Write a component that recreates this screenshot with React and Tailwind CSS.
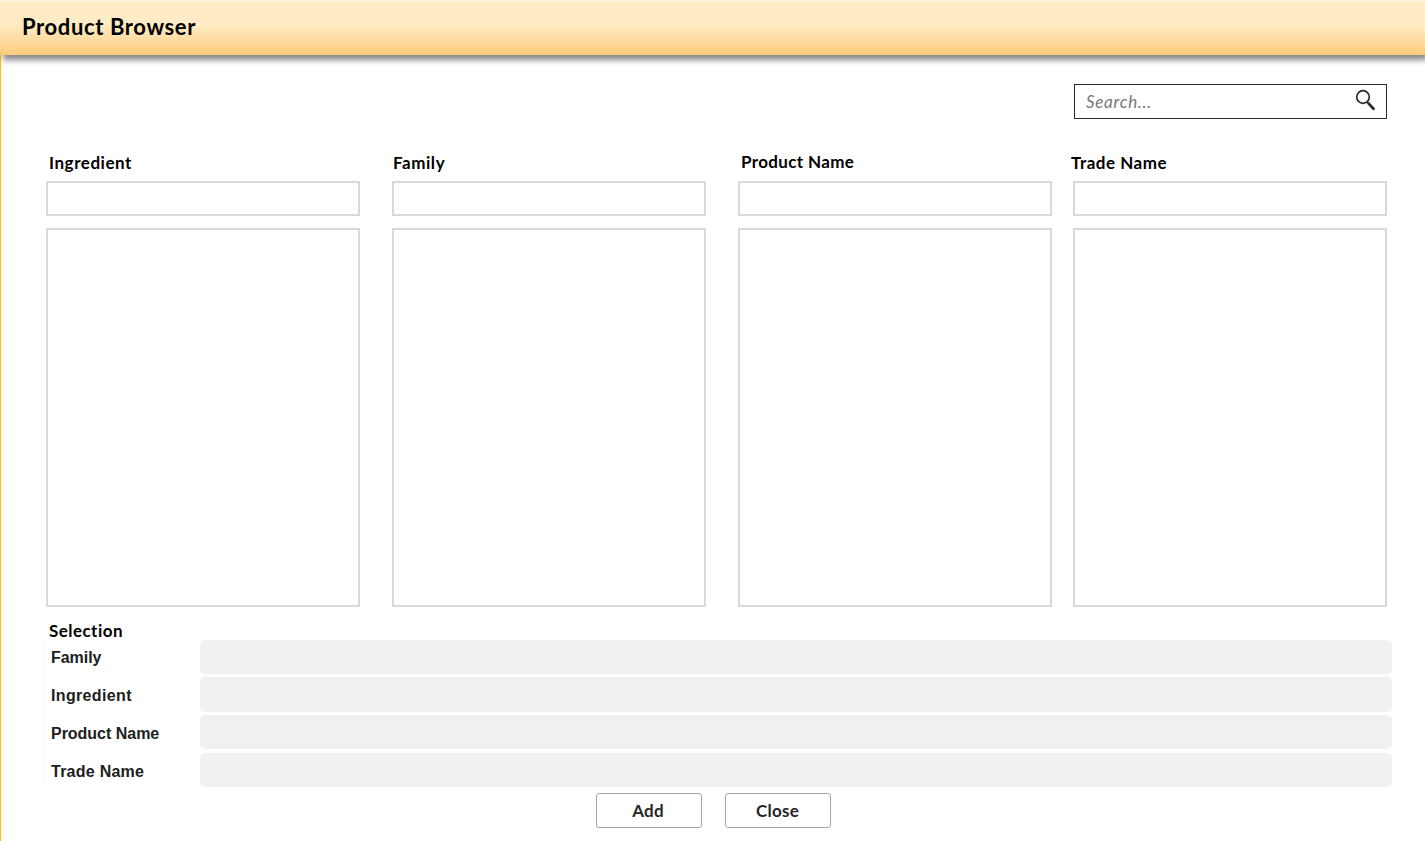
const columns = [
  { name: 'Ingredient', box: 'ml-[45px]', label: 'pl-[3px] pt-[7px] tracking-[0.55px]' },
  { name: 'Family', box: 'ml-8', label: 'pl-[1px] pt-[7px] tracking-[0.55px]' },
  { name: 'Product Name', box: 'ml-8', label: 'pl-[3px] pt-[6px] tracking-[0.35px]' },
  { name: 'Trade Name', box: 'ml-[21px]', label: '-ml-[2px] pt-[7px] tracking-[0.5px]' },
];

const selections = [
  { name: 'Family', row: 'h-[34px]', label: 'pt-[2px] tracking-[-0.05px]' },
  { name: 'Ingredient', row: 'h-[35px] mt-[3px]', label: 'pt-[2px] tracking-[0.35px]' },
  { name: 'Product Name', row: 'h-[34px] mt-[3px]', label: 'pt-1 tracking-[-0.02px]' },
  { name: 'Trade Name', row: 'h-[34px] mt-1', label: 'pt-1 tracking-[0.25px]' },
];

function SearchIcon() {
  return (
    <svg className="mb-[3px] h-[22px] w-[21px] shrink-0" viewBox="0 0 21 22" fill="none" stroke="#2b2b2b">
      <circle cx="8" cy="8" r="6.3" strokeWidth="1.7" />
      <path d="M11.8 12.6 13.4 14.3" strokeWidth="1.6" />
      <path d="M13.5 14.4 18.5 19.8" strokeWidth="2.8" strokeLinecap="round" />
    </svg>
  );
}

export default function App() {
  return (
    <div className="flex h-[841px] w-[1425px] flex-col overflow-hidden bg-white font-['Lato','Liberation_Sans',sans-serif] text-black">
      <header className="relative z-10 flex h-[55px] shrink-0 items-center border-t border-[#fff3da] bg-[linear-gradient(to_bottom,#ffecc6_0%,#ffecc6_42%,#fedda3_70%,#fecb79_100%)] pb-[2px] pl-[22px] shadow-[3px_5px_6px_rgba(0,0,0,0.48)]">
        <h1 className="text-[22px] leading-[26px] font-bold tracking-[0.62px]">Product Browser</h1>
      </header>
      <main className="flex flex-1 flex-col border-l border-[#ffc000]">
        <div className="mt-[29px] mr-[38px] flex h-[35px] w-[313px] shrink-0 items-center self-end border border-[#2b2b2b] pl-[11px] pr-[10px]">
          <input
            type="text"
            aria-label="Search"
            placeholder="Search..."
            className="min-w-0 flex-1 text-[17px] tracking-[0.7px] italic outline-none placeholder:text-[#777]"
          />
          <SearchIcon />
        </div>
        <div className="mt-[27px] flex shrink-0">
          {columns.map((c) => (
            <section key={c.name} className={`flex w-[314px] shrink-0 flex-col ${c.box}`}>
              <h2 className={`h-[35px] text-[17px] leading-5 font-bold ${c.label}`}>{c.name}</h2>
              <input type="text" aria-label={c.name} className="h-[35px] w-full border-2 border-[#d9d9d9] px-2 outline-none" />
              <div className="mt-3 h-[379px] border-2 border-[#d9d9d9]" />
            </section>
          ))}
        </div>
        <h2 className="mt-[14px] h-[19px] shrink-0 pl-12 text-[17px] leading-5 font-bold tracking-[0.45px]">Selection</h2>
        <div className="ml-[43px] flex h-[147px] shrink-0 flex-col border-l border-[#f3f8fc]">
          {selections.map((s) => (
            <div key={s.name} className={`flex items-center ${s.row}`}>
              <span className={`w-[155px] pl-[6px] font-['Liberation_Sans',sans-serif] text-[16px] leading-5 font-bold text-[#202020] ${s.label}`}>{s.name}</span>
              <div className="h-full w-[1192px] rounded-[5px] bg-[#f1f1f1]" />
            </div>
          ))}
        </div>
        <div className="mt-[6px] ml-[595px] flex gap-[23px] text-[17px] font-bold tracking-[0.25px] text-[#262626]">
          <button className="h-[35px] w-[106px] rounded-[3px] border border-[#a6a6a6] pr-[2px]">Add</button>
          <button className="h-[35px] w-[106px] rounded-[3px] border border-[#a6a6a6] pr-[1px]">Close</button>
        </div>
      </main>
    </div>
  );
}
